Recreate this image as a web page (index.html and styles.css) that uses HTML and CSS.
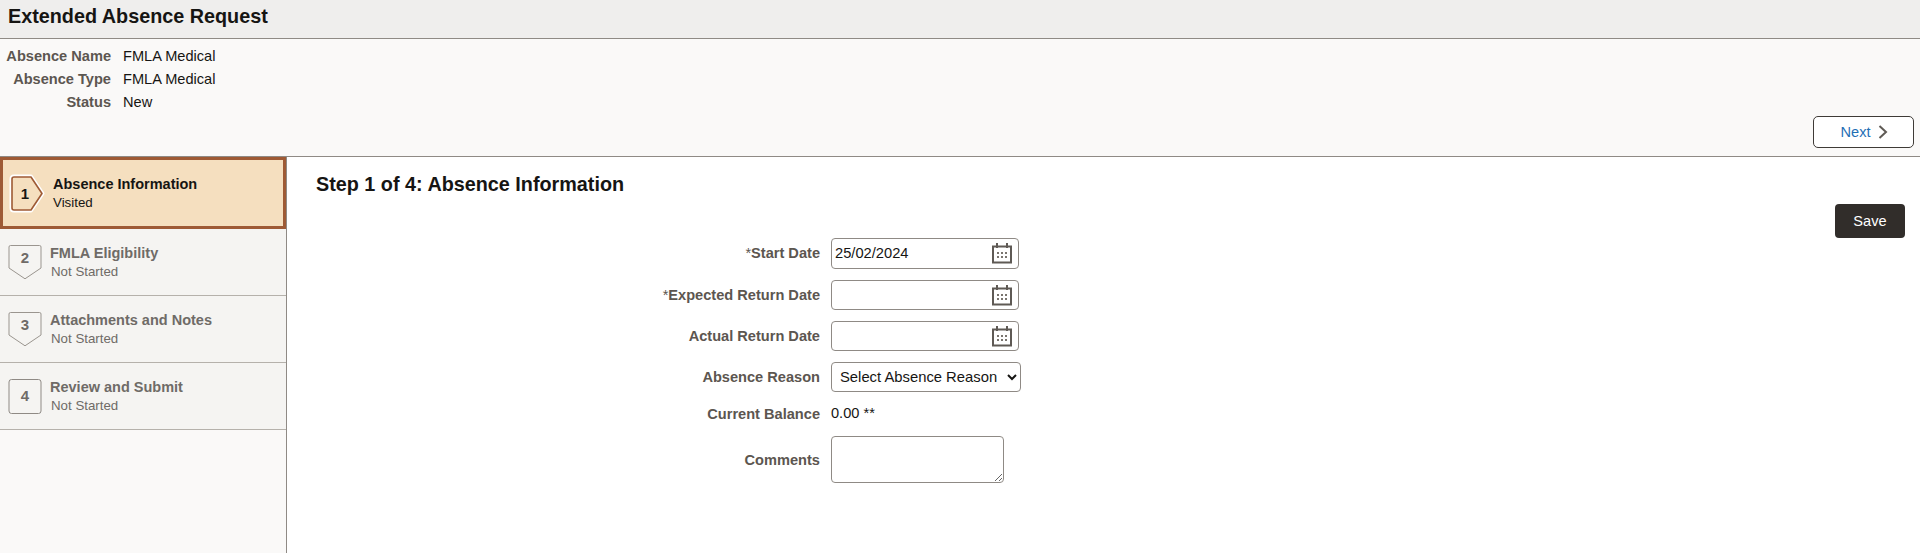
FILE: index.html
```html
<!DOCTYPE html>
<html lang="en">
<head>
<meta charset="utf-8">
<title>Extended Absence Request</title>
<link rel="stylesheet" href="styles.css">
</head>
<body>
<header class="title-bar"><h1>Extended Absence Request</h1></header>
<section class="summary">
  <dl class="summary-list">
    <dt>Absence Name</dt><dd>FMLA Medical</dd>
    <dt>Absence Type</dt><dd>FMLA Medical</dd>
    <dt>Status</dt><dd>New</dd>
  </dl>
  <div class="summary-actions">
    <button class="next-btn" type="button">Next
      <svg width="12" height="16" viewBox="0 0 12 16"><path d="M2.500 2l6.500 6-6.500 6" fill="none" stroke="#5f5a55" stroke-width="2"/></svg>
    </button>
  </div>
</section>
<div class="layout">
  <nav class="steps">
    <a class="step step-current">
      <svg class="badge" width="36" height="39" viewBox="0 0 36 39">
        <path d="M5 2.500H22L33.500 19.500 22 36.500H5Q2.500 36.500 2.500 34V5Q2.500 2.500 5 2.500Z" fill="#f5dfbf" stroke="#fff" stroke-width="4" stroke-linejoin="round"/>
        <path d="M5 3H22L33 19.500 22 36H5Q3 36 3 34V5Q3 3 5 3Z" fill="#f5dfbf" stroke="#9e5a35" stroke-width="1.600" stroke-linejoin="round"/>
        <text x="16" y="25" text-anchor="middle" class="badge-num badge-num-current">1</text>
      </svg>
      <span class="step-text"><b>Absence Information</b><small>Visited</small></span>
    </a>
    <a class="step">
      <svg class="badge" width="34" height="35" viewBox="0 0 34 35">
        <path d="M2.500 .5H31.500Q33 .5 33 2V23L17 33.800 1 23V2Q1 .5 2.500 .5Z" fill="#f5f4f2" stroke="#9a958f"/>
        <text x="17" y="18" text-anchor="middle" class="badge-num">2</text>
      </svg>
      <span class="step-text"><b>FMLA Eligibility</b><small>Not Started</small></span>
    </a>
    <a class="step">
      <svg class="badge" width="34" height="35" viewBox="0 0 34 35">
        <path d="M2.500 .5H31.500Q33 .5 33 2V23L17 33.800 1 23V2Q1 .5 2.500 .5Z" fill="#f5f4f2" stroke="#9a958f"/>
        <text x="17" y="18" text-anchor="middle" class="badge-num">3</text>
      </svg>
      <span class="step-text"><b>Attachments and Notes</b><small>Not Started</small></span>
    </a>
    <a class="step">
      <svg class="badge" width="34" height="35" viewBox="0 0 34 35">
        <rect x="1" y=".5" width="32" height="34" rx="2.500" fill="#f5f4f2" stroke="#8f8a85"/>
        <text x="17" y="22" text-anchor="middle" class="badge-num">4</text>
      </svg>
      <span class="step-text"><b>Review and Submit</b><small>Not Started</small></span>
    </a>
  </nav>
  <main class="content">
    <h2>Step 1 of 4: Absence Information</h2>
    <div class="content-actions"><button class="save-btn" type="button">Save</button></div>
    <form class="form">
      <label class="lbl lbl-first"><span class="req">*</span>Start Date</label>
      <div class="date-field date-field-first"><input type="text" value="25/02/2024">
        <svg class="cal" width="20" height="22" viewBox="0 0 20 22"><use href="#cal"/></svg></div>
      <label class="lbl"><span class="req">*</span>Expected Return Date</label>
      <div class="date-field"><input type="text">
        <svg class="cal" width="20" height="22" viewBox="0 0 20 22"><use href="#cal"/></svg></div>
      <label class="lbl">Actual Return Date</label>
      <div class="date-field"><input type="text">
        <svg class="cal" width="20" height="22" viewBox="0 0 20 22"><use href="#cal"/></svg></div>
      <label class="lbl">Absence Reason</label>
      <select class="sel"><option>Select Absence Reason</option></select>
      <span class="lbl">Current Balance</span>
      <span class="val">0.00 **</span>
      <label class="lbl lbl-comments">Comments</label>
      <textarea class="comments"></textarea>
    </form>
  </main>
</div>
<svg class="defs" width="0" height="0">
  <symbol id="cal" viewBox="0 0 20 22">
    <path d="M1 4.500H19V20.500H1Z" fill="none" stroke="#5f5a55" stroke-width="2"/>
    <path d="M5 1v5M15 1v5" stroke="#5f5a55" stroke-width="2"/>
    <path d="M5 10h2v2H5zM9 10h2v2H9zM13 10h2v2h-2zM5 14h2v2H5zM9 14h2v2H9zM13 14h2v2h-2z" fill="#7a756f"/>
  </symbol>
</svg>
</body>
</html>
```
FILE: styles.css
```css
* { box-sizing: border-box; }
html, body { margin: 0; height: 553px; overflow: hidden; }
body { font-family: "Liberation Sans", Arial, sans-serif; font-size: 14.600px; color: #161513; background: #fff; display: flex; flex-direction: column; }
.title-bar { height: 39px; background: #efeeed; border-bottom: 1px solid #8f8a85; padding: 0 8px; flex: none; }
.title-bar h1 { margin: 0; font-size: 19.800px; line-height: 32px; font-weight: 700; }
.summary { height: 118px; background: #faf9f8; border-bottom: 1px solid #8f8a85; flex: none; display: flex; flex-direction: column; justify-content: space-between; padding: 6px 6px 8px 0; }
.summary-list { margin: 0; display: grid; grid-template-columns: 111px 1fr; column-gap: 12px; grid-auto-rows: 23px; line-height: 23px; }
.summary-list dt { text-align: right; font-weight: 700; color: #5c5650; }
.summary-list dd { margin: 0; }
.summary-actions { display: flex; justify-content: flex-end; }
.next-btn { width: 101px; height: 32px; background: #fff; border: 1px solid #3f3b37; border-radius: 5px; color: #1f6fb5; font: 14.600px "Liberation Sans", Arial, sans-serif; display: flex; align-items: center; justify-content: center; gap: 6px; padding: 0 0 0 2px; }
.layout { flex: 1; display: flex; min-height: 0; }
.steps { width: 287px; flex: none; background: #faf9f8; border-right: 1px solid #8f8a85; }
.step { display: flex; align-items: center; height: 67px; background: #f5f4f2; border-bottom: 1px solid #b5b1ab; padding-left: 8px; gap: 8px; }
.step-current { height: 72px; background: #f5dfbf; border: 3px solid #9e5a35; padding-left: 6px; gap: 8px; }
.step-text { display: flex; flex-direction: column; color: #6f6b67; margin-top: 0; }
.step-text b { font-size: 14.500px; line-height: 19px; }
.step-text small { font-size: 13.300px; line-height: 17px; padding-left: 1px; }
.step-current .step-text { color: #161513; }
.step-current .step-text small { padding-left: 0; }
.badge { flex: none; }
.badge-num { font: 700 15px "Liberation Sans", Arial, sans-serif; fill: #6f6b67; }
.badge-num-current { fill: #161513; }
.content { flex: 1; min-width: 0; }
.content h2 { margin: 0; padding: 16px 0 0 29px; font-size: 19.800px; line-height: 22px; font-weight: 700; height: 47px; }
.content-actions { display: flex; justify-content: flex-end; padding-right: 15px; }
.save-btn { width: 70px; height: 34px; background: #312d2a; color: #fff; border: 0; border-radius: 4px; font: 14.600px "Liberation Sans", Arial, sans-serif; padding: 0; }
.form { display: grid; grid-template-columns: 533px auto; justify-content: start; column-gap: 11px; row-gap: 11px; align-items: center; justify-items: start; }
.lbl { justify-self: end; font-weight: 700; color: #5c5650; }
.lbl-first { padding-bottom: 2px; }
.lbl-comments { padding-top: 2px; }
.req { font-weight: 400; }
.date-field { position: relative; width: 188px; height: 30px; }
.date-field-first { height: 31px; }
.date-field-first input { padding-bottom: 2px; }
.date-field input { width: 100%; height: 100%; border: 1px solid #8f8a85; border-radius: 4px; padding-left: 3px; padding-right: 3px; padding-top: 0; font: 14.700px "Liberation Sans", Arial, sans-serif; color: #161513; background: #fff; outline: 0; }
.cal { position: absolute; right: 7px; top: 4px; }
.sel { width: 190px; height: 30px; border: 1px solid #8f8a85; border-radius: 4px; background: #fff; font: 14.800px "Liberation Sans", Arial, sans-serif; color: #161513; padding: 0 4px; }
.val { line-height: 21px; }
.comments { width: 173px; height: 47px; border: 1px solid #8f8a85; border-radius: 4px; display: block; background: #fff; outline: 0; margin: 1px 0 0; }
.defs { position: absolute; }
```
